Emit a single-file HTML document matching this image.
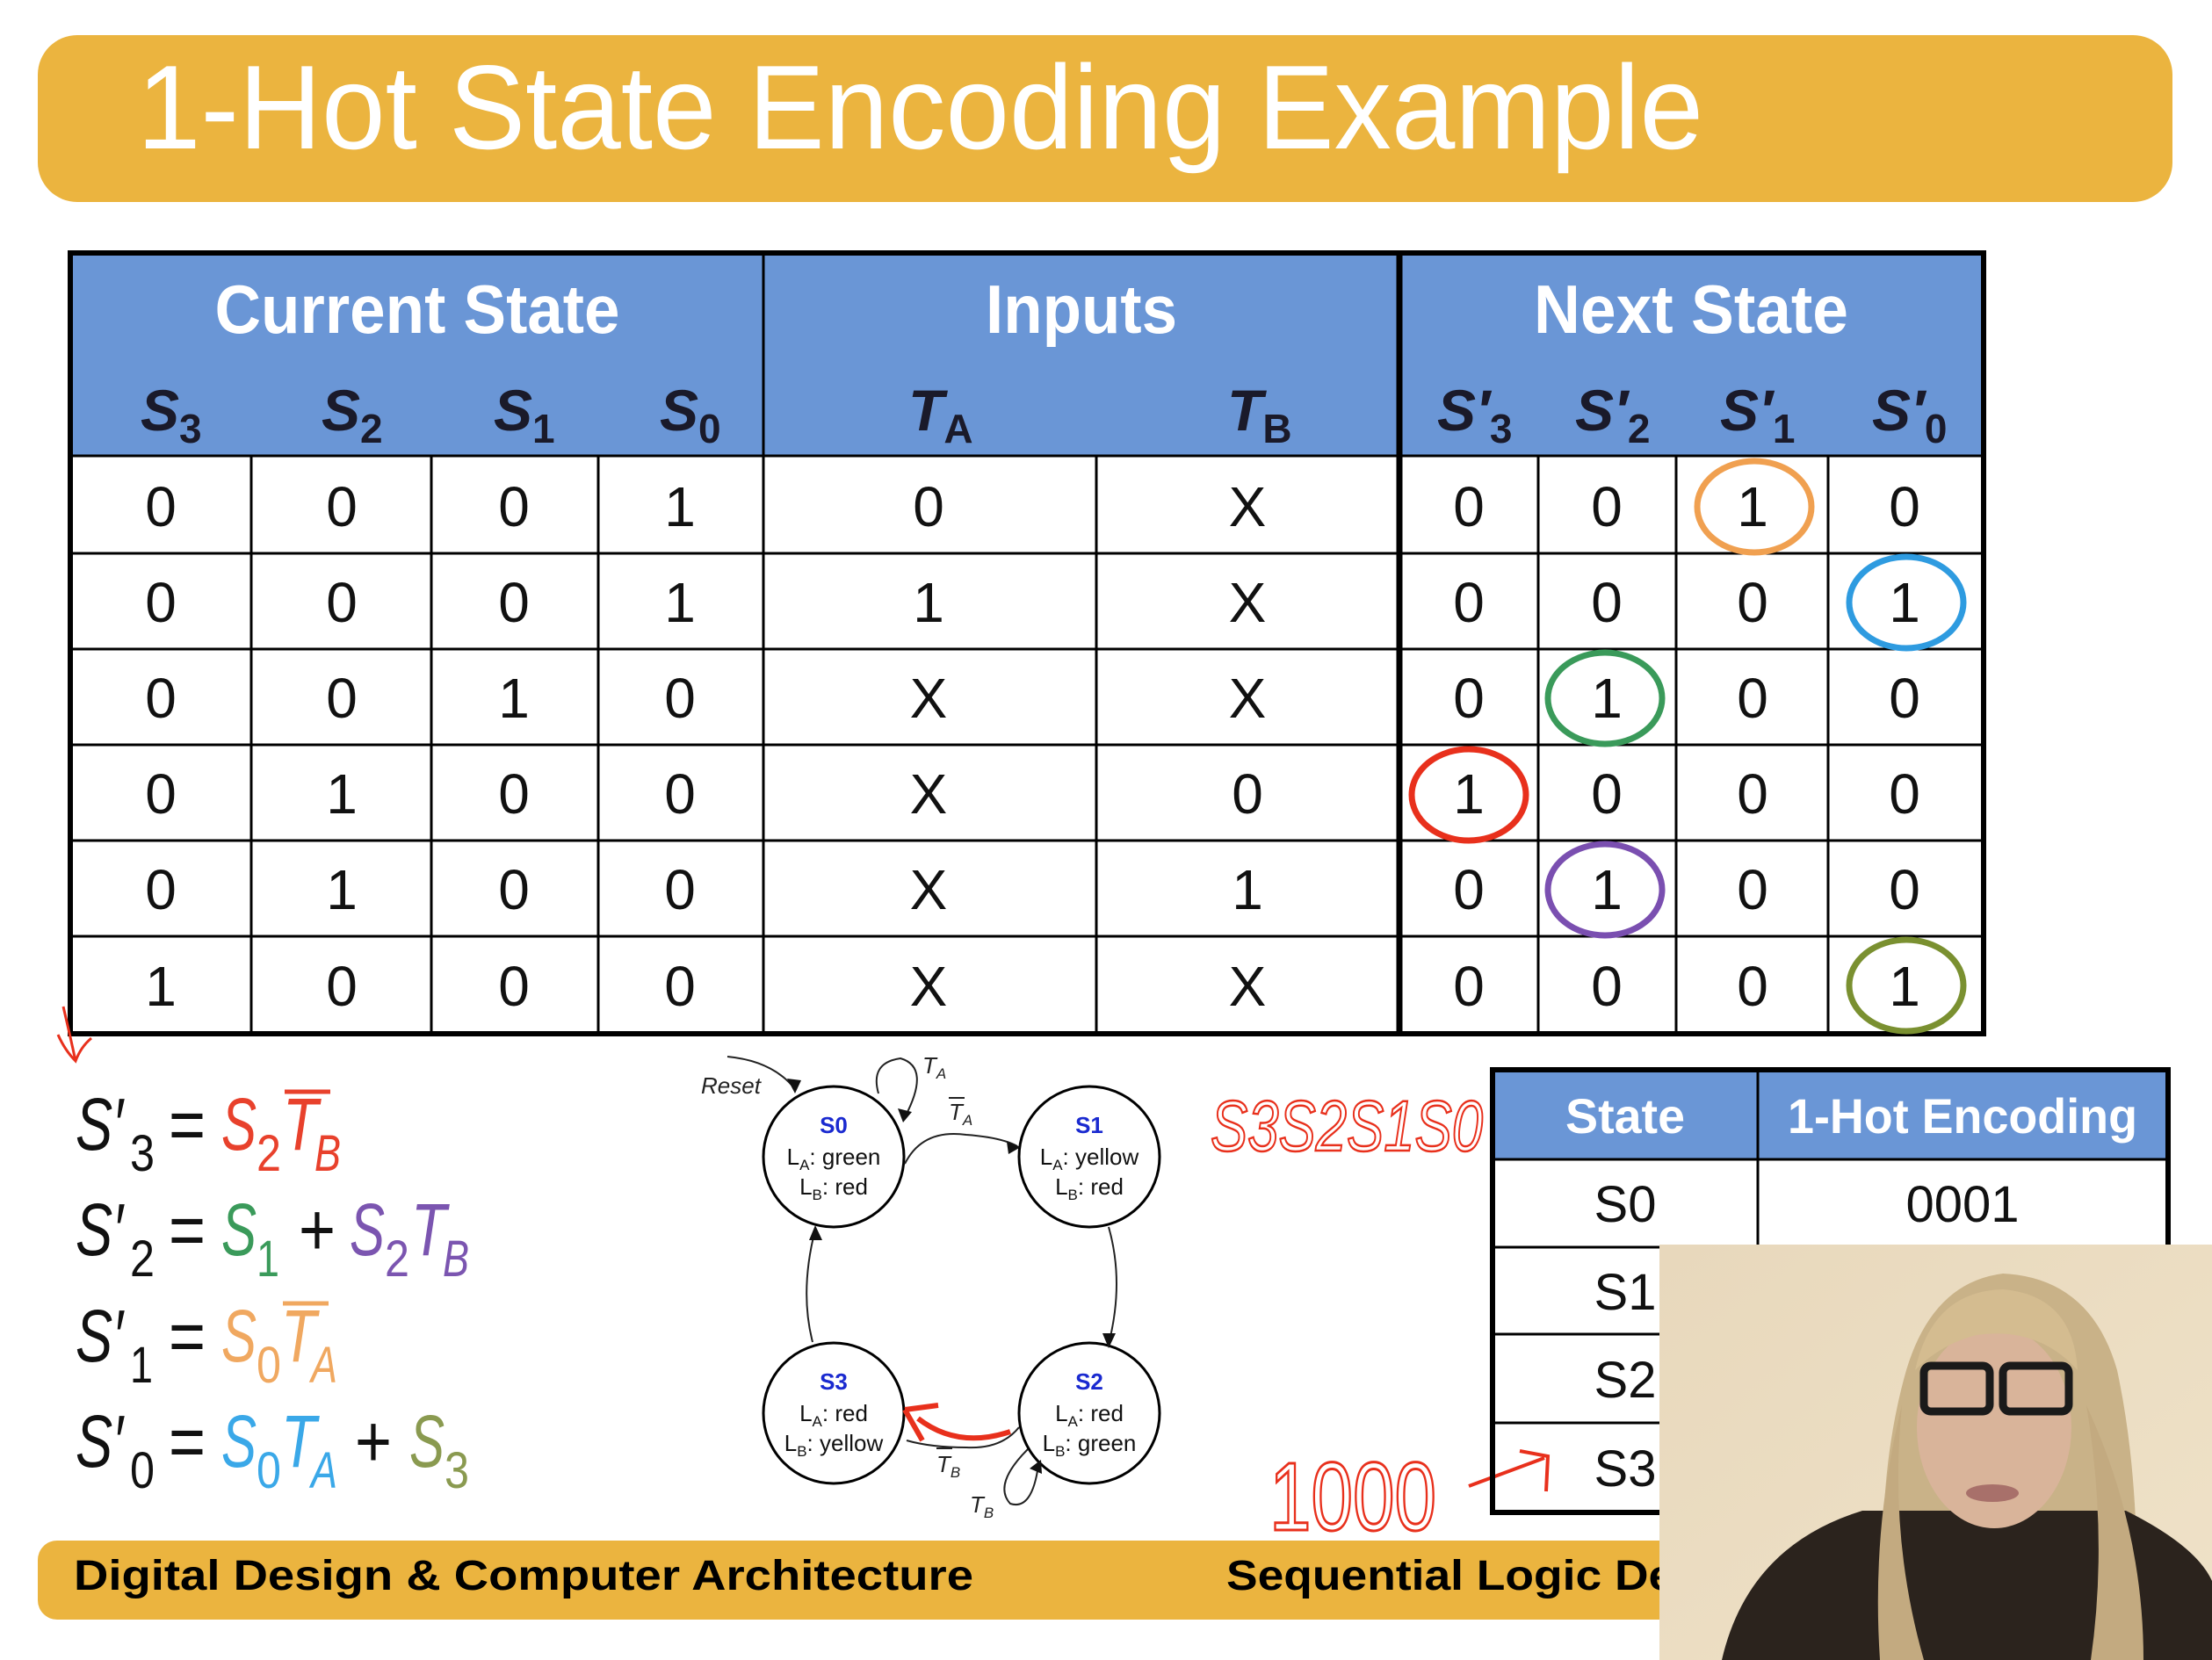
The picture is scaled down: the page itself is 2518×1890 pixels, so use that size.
<!DOCTYPE html>
<html><head><meta charset="utf-8"><style>
html,body{margin:0;padding:0;background:#fff;}
svg{display:block;}
text{font-family:"Liberation Sans",sans-serif;}
</style></head><body>
<svg width="2518" height="1890" viewBox="0 0 2518 1890" xmlns="http://www.w3.org/2000/svg">
<rect width="2518" height="1890" fill="#fff"/>
<!-- Title -->
<rect x="43" y="40" width="2430" height="190" rx="45" fill="#EBB43F"/>
<text x="156" y="169" font-size="136" fill="#fff" textLength="1783" lengthAdjust="spacingAndGlyphs">1-Hot State Encoding Example</text>

<!-- Main table -->
<rect x="80" y="288" width="2178" height="231" fill="#6A96D6"/>
<g font-weight="bold" fill="#fff" font-size="78">
<text x="475" y="379" text-anchor="middle" textLength="461" lengthAdjust="spacingAndGlyphs">Current State</text>
<text x="1231" y="379" text-anchor="middle" textLength="218" lengthAdjust="spacingAndGlyphs">Inputs</text>
<text x="1925" y="379" text-anchor="middle" textLength="358" lengthAdjust="spacingAndGlyphs">Next State</text>
</g>
<g font-weight="bold" font-style="italic" fill="#1a1a2a" font-size="66">
<text x="160" y="490">S<tspan font-size="46" font-style="normal" dy="14">3</tspan></text>
<text x="366" y="490">S<tspan font-size="46" font-style="normal" dy="14">2</tspan></text>
<text x="562" y="490">S<tspan font-size="46" font-style="normal" dy="14">1</tspan></text>
<text x="751" y="490">S<tspan font-size="46" font-style="normal" dy="14">0</tspan></text>
<text x="1034" y="490">T<tspan font-size="46" font-style="normal" dy="14">A</tspan></text>
<text x="1397" y="490">T<tspan font-size="46" font-style="normal" dy="14">B</tspan></text>
<text x="1636" y="490">S′<tspan font-size="46" font-style="normal" dy="14">3</tspan></text>
<text x="1793" y="490">S′<tspan font-size="46" font-style="normal" dy="14">2</tspan></text>
<text x="1958" y="490">S′<tspan font-size="46" font-style="normal" dy="14">1</tspan></text>
<text x="2131" y="490">S′<tspan font-size="46" font-style="normal" dy="14">0</tspan></text>
</g>
<g stroke="#000" stroke-width="3">
<line x1="80" y1="519" x2="2258" y2="519"/>
<line x1="80" y1="630" x2="2258" y2="630"/>
<line x1="80" y1="739" x2="2258" y2="739"/>
<line x1="80" y1="848" x2="2258" y2="848"/>
<line x1="80" y1="957" x2="2258" y2="957"/>
<line x1="80" y1="1066" x2="2258" y2="1066"/>
<line x1="286" y1="519" x2="286" y2="1177"/>
<line x1="491" y1="519" x2="491" y2="1177"/>
<line x1="681" y1="519" x2="681" y2="1177"/>
<line x1="869" y1="288" x2="869" y2="1177"/>
<line x1="1248" y1="519" x2="1248" y2="1177"/>
<line x1="1751" y1="519" x2="1751" y2="1177"/>
<line x1="1908" y1="519" x2="1908" y2="1177"/>
<line x1="2081" y1="519" x2="2081" y2="1177"/>
</g>
<line x1="1593" y1="288" x2="1593" y2="1177" stroke="#000" stroke-width="7"/>
<rect x="80" y="288" width="2178" height="889" fill="none" stroke="#000" stroke-width="6"/>
<g font-size="64" fill="#111" text-anchor="middle">
<g transform="translate(0,599)"><text x="183">0</text><text x="389">0</text><text x="585">0</text><text x="774">1</text><text x="1057">0</text><text x="1420">X</text><text x="1672">0</text><text x="1829">0</text><text x="1995">1</text><text x="2168">0</text></g>
<g transform="translate(0,708)"><text x="183">0</text><text x="389">0</text><text x="585">0</text><text x="774">1</text><text x="1057">1</text><text x="1420">X</text><text x="1672">0</text><text x="1829">0</text><text x="1995">0</text><text x="2168">1</text></g>
<g transform="translate(0,817)"><text x="183">0</text><text x="389">0</text><text x="585">1</text><text x="774">0</text><text x="1057">X</text><text x="1420">X</text><text x="1672">0</text><text x="1829">1</text><text x="1995">0</text><text x="2168">0</text></g>
<g transform="translate(0,926)"><text x="183">0</text><text x="389">1</text><text x="585">0</text><text x="774">0</text><text x="1057">X</text><text x="1420">0</text><text x="1672">1</text><text x="1829">0</text><text x="1995">0</text><text x="2168">0</text></g>
<g transform="translate(0,1035)"><text x="183">0</text><text x="389">1</text><text x="585">0</text><text x="774">0</text><text x="1057">X</text><text x="1420">1</text><text x="1672">0</text><text x="1829">1</text><text x="1995">0</text><text x="2168">0</text></g>
<g transform="translate(0,1145)"><text x="183">1</text><text x="389">0</text><text x="585">0</text><text x="774">0</text><text x="1057">X</text><text x="1420">X</text><text x="1672">0</text><text x="1829">0</text><text x="1995">0</text><text x="2168">1</text></g>
</g>
<g fill="none" stroke-width="7">
<ellipse cx="1997" cy="577" rx="65" ry="52" stroke="#F0A050"/>
<ellipse cx="2170" cy="686" rx="65" ry="52" stroke="#2E9BE0"/>
<ellipse cx="1827" cy="795" rx="65" ry="52" stroke="#3A9A5A"/>
<ellipse cx="1672" cy="905" rx="65" ry="52" stroke="#E8301C"/>
<ellipse cx="1827" cy="1013" rx="65" ry="52" stroke="#7A4FB0"/>
<ellipse cx="2170" cy="1122" rx="65" ry="52" stroke="#7A9030"/>
</g>

<!-- red mark top-left -->
<path d="M72 1146 Q80 1180 86 1208 M66 1178 Q74 1196 86 1208 Q92 1192 104 1182" stroke="#E8301C" stroke-width="3" fill="none"/>

<!-- Equations -->
<g font-size="84" font-style="italic">
<g fill="#111"><text x="86" y="1309" textLength="54" lengthAdjust="spacingAndGlyphs">S′</text><text x="148" y="1333" font-size="58" font-style="normal" textLength="28" lengthAdjust="spacingAndGlyphs">3</text><text x="192" y="1309" font-style="normal" textLength="42" lengthAdjust="spacingAndGlyphs">=</text></g>
<g fill="#E8412C"><text x="252" y="1309" textLength="40" lengthAdjust="spacingAndGlyphs">S</text><text x="292" y="1333" font-size="58" font-style="normal" textLength="28" lengthAdjust="spacingAndGlyphs">2</text><text x="322" y="1309" textLength="40" lengthAdjust="spacingAndGlyphs">T</text><text x="358" y="1333" font-size="58" textLength="30" lengthAdjust="spacingAndGlyphs">B</text></g>
<line x1="324" y1="1243" x2="376" y2="1243" stroke="#E8412C" stroke-width="5"/>

<g fill="#111"><text x="86" y="1429" textLength="54" lengthAdjust="spacingAndGlyphs">S′</text><text x="148" y="1453" font-size="58" font-style="normal" textLength="28" lengthAdjust="spacingAndGlyphs">2</text><text x="192" y="1429" font-style="normal" textLength="42" lengthAdjust="spacingAndGlyphs">=</text><text x="340" y="1429" font-style="normal" textLength="42" lengthAdjust="spacingAndGlyphs">+</text></g>
<g fill="#3A9A5A"><text x="252" y="1429" textLength="40" lengthAdjust="spacingAndGlyphs">S</text><text x="292" y="1453" font-size="58" font-style="normal" textLength="26" lengthAdjust="spacingAndGlyphs">1</text></g>
<g fill="#7B55B0"><text x="398" y="1429" textLength="40" lengthAdjust="spacingAndGlyphs">S</text><text x="438" y="1453" font-size="58" font-style="normal" textLength="28" lengthAdjust="spacingAndGlyphs">2</text><text x="468" y="1429" textLength="40" lengthAdjust="spacingAndGlyphs">T</text><text x="504" y="1453" font-size="58" textLength="30" lengthAdjust="spacingAndGlyphs">B</text></g>

<g fill="#111"><text x="86" y="1550" textLength="54" lengthAdjust="spacingAndGlyphs">S′</text><text x="148" y="1574" font-size="58" font-style="normal" textLength="26" lengthAdjust="spacingAndGlyphs">1</text><text x="192" y="1550" font-style="normal" textLength="42" lengthAdjust="spacingAndGlyphs">=</text></g>
<g fill="#F0A860"><text x="252" y="1550" textLength="40" lengthAdjust="spacingAndGlyphs">S</text><text x="292" y="1574" font-size="58" font-style="normal" textLength="28" lengthAdjust="spacingAndGlyphs">0</text><text x="320" y="1550" textLength="40" lengthAdjust="spacingAndGlyphs">T</text><text x="354" y="1574" font-size="58" textLength="30" lengthAdjust="spacingAndGlyphs">A</text></g>
<line x1="322" y1="1484" x2="374" y2="1484" stroke="#F0A860" stroke-width="5"/>

<g fill="#111"><text x="86" y="1670" textLength="54" lengthAdjust="spacingAndGlyphs">S′</text><text x="148" y="1694" font-size="58" font-style="normal" textLength="28" lengthAdjust="spacingAndGlyphs">0</text><text x="192" y="1670" font-style="normal" textLength="42" lengthAdjust="spacingAndGlyphs">=</text><text x="404" y="1670" font-style="normal" textLength="42" lengthAdjust="spacingAndGlyphs">+</text></g>
<g fill="#3AA8E8"><text x="252" y="1670" textLength="40" lengthAdjust="spacingAndGlyphs">S</text><text x="292" y="1694" font-size="58" font-style="normal" textLength="28" lengthAdjust="spacingAndGlyphs">0</text><text x="320" y="1670" textLength="40" lengthAdjust="spacingAndGlyphs">T</text><text x="354" y="1694" font-size="58" textLength="30" lengthAdjust="spacingAndGlyphs">A</text></g>
<g fill="#8A9A50"><text x="466" y="1670" textLength="40" lengthAdjust="spacingAndGlyphs">S</text><text x="506" y="1694" font-size="58" font-style="normal" textLength="28" lengthAdjust="spacingAndGlyphs">3</text></g>
</g>

<!-- State diagram -->
<g fill="#fff" stroke="#000" stroke-width="3">
<ellipse cx="949" cy="1317" rx="80" ry="80"/>
<ellipse cx="1240" cy="1317" rx="80" ry="80"/>
<ellipse cx="949" cy="1609" rx="80" ry="80"/>
<ellipse cx="1240" cy="1609" rx="80" ry="80"/>
</g>
<g font-size="26" text-anchor="middle" fill="#111">
<text x="949" y="1290" fill="#1a2ad0" font-weight="bold">S0</text>
<text x="949" y="1326">L<tspan font-size="17" dy="6">A</tspan><tspan dy="-6">: green</tspan></text>
<text x="949" y="1360">L<tspan font-size="17" dy="6">B</tspan><tspan dy="-6">: red</tspan></text>
<text x="1240" y="1290" fill="#1a2ad0" font-weight="bold">S1</text>
<text x="1240" y="1326">L<tspan font-size="17" dy="6">A</tspan><tspan dy="-6">: yellow</tspan></text>
<text x="1240" y="1360">L<tspan font-size="17" dy="6">B</tspan><tspan dy="-6">: red</tspan></text>
<text x="949" y="1582" fill="#1a2ad0" font-weight="bold">S3</text>
<text x="949" y="1618">L<tspan font-size="17" dy="6">A</tspan><tspan dy="-6">: red</tspan></text>
<text x="949" y="1652">L<tspan font-size="17" dy="6">B</tspan><tspan dy="-6">: yellow</tspan></text>
<text x="1240" y="1582" fill="#1a2ad0" font-weight="bold">S2</text>
<text x="1240" y="1618">L<tspan font-size="17" dy="6">A</tspan><tspan dy="-6">: red</tspan></text>
<text x="1240" y="1652">L<tspan font-size="17" dy="6">B</tspan><tspan dy="-6">: green</tspan></text>
</g>
<g font-size="26" font-style="italic" fill="#222">
<text x="798" y="1245">Reset</text>
<text x="1050" y="1222">T<tspan font-size="17" dy="6">A</tspan></text>
<text x="1080" y="1275">T<tspan font-size="17" dy="6">A</tspan></text>
<text x="1066" y="1676">T<tspan font-size="17" dy="6">B</tspan></text>
<text x="1104" y="1722">T<tspan font-size="17" dy="6">B</tspan></text>
</g>
<g stroke="#222" stroke-width="2" fill="none">
<line x1="1080" y1="1250" x2="1098" y2="1250"/>
<line x1="1066" y1="1649" x2="1084" y2="1649"/>
<path d="M828 1203 Q880 1208 905 1240"/>
<path d="M1000 1245 Q990 1210 1025 1205 Q1060 1215 1030 1272"/>
<path d="M1030 1325 Q1050 1285 1100 1292 Q1140 1295 1158 1305"/>
<path d="M1262 1397 Q1280 1460 1262 1530"/>
<path d="M925 1528 Q910 1470 928 1400"/>
<path d="M1160 1625 Q1140 1650 1100 1648 Q1060 1648 1032 1640"/>
<path d="M1170 1650 Q1130 1690 1150 1712 Q1175 1720 1182 1668"/>
</g>
<g fill="#111">
<path d="M905 1245 L896 1228 L912 1230 Z"/>
<path d="M1028 1278 L1022 1262 L1038 1266 Z"/>
<path d="M1162 1306 L1146 1300 L1148 1314 Z"/>
<path d="M1262 1535 L1255 1518 L1270 1518 Z"/>
<path d="M928 1395 L921 1412 L936 1412 Z"/>
<path d="M1185 1662 L1172 1672 L1186 1678 Z"/>
</g>
<path d="M1150 1630 Q1090 1650 1045 1615 M1030 1605 L1068 1600 M1030 1605 L1050 1640" stroke="#E8301C" stroke-width="6" fill="none"/>

<!-- handwritten -->
<text x="1378" y="1310" font-family="Liberation Serif" font-style="italic" font-size="82" fill="none" stroke="#E8301C" stroke-width="2.5" textLength="310" lengthAdjust="spacingAndGlyphs">S3S2S1S0</text>
<text x="1445" y="1742" font-family="Liberation Serif" font-size="110" fill="none" stroke="#E8301C" stroke-width="3" textLength="190" lengthAdjust="spacingAndGlyphs">1000</text>
<path d="M1672 1692 L1758 1660 M1730 1652 L1762 1658 L1760 1698" stroke="#E8301C" stroke-width="4" fill="none"/>

<!-- small table -->
<rect x="1699" y="1218" width="769" height="102" fill="#6A96D6"/>
<g stroke="#000" stroke-width="3">
<line x1="1699" y1="1320" x2="2468" y2="1320"/>
<line x1="1699" y1="1420" x2="2468" y2="1420"/>
<line x1="1699" y1="1519" x2="2468" y2="1519"/>
<line x1="1699" y1="1620" x2="2468" y2="1620"/>
<line x1="2001" y1="1218" x2="2001" y2="1722"/>
</g>
<rect x="1699" y="1218" width="769" height="504" fill="none" stroke="#000" stroke-width="6"/>
<g font-size="56" font-weight="bold" fill="#fff" text-anchor="middle">
<text x="1850" y="1290" textLength="136" lengthAdjust="spacingAndGlyphs">State</text>
<text x="2234" y="1290" textLength="398" lengthAdjust="spacingAndGlyphs">1-Hot Encoding</text>
</g>
<g font-size="58" fill="#111" text-anchor="middle">
<text x="1850" y="1391">S0</text><text x="2234" y="1391">0001</text>
<text x="1850" y="1491">S1</text>
<text x="1850" y="1591">S2</text>
<text x="1850" y="1692">S3</text>
</g>

<!-- footer -->
<rect x="43" y="1754" width="2440" height="90" rx="22" fill="#EBB43F"/>
<text x="84" y="1810" font-size="48" font-weight="bold" fill="#000" textLength="1024" lengthAdjust="spacingAndGlyphs">Digital Design &amp; Computer Architecture</text>
<text x="1396" y="1810" font-size="48" font-weight="bold" fill="#000" textLength="620" lengthAdjust="spacingAndGlyphs">Sequential Logic Design</text>

<!-- webcam -->
<defs>
<linearGradient id="bg" x1="0" y1="0" x2="1" y2="1"><stop offset="0" stop-color="#E8D8BC"/><stop offset="1" stop-color="#EFE2C8"/></linearGradient>
<clipPath id="cam"><rect x="1889" y="1417" width="629" height="473"/></clipPath>
</defs>
<g clip-path="url(#cam)">
<rect x="1889" y="1417" width="629" height="473" fill="url(#bg)"/>
<path d="M2150 1890 Q2130 1700 2170 1560 Q2200 1460 2280 1450 Q2380 1455 2410 1560 Q2440 1700 2430 1890 Z" fill="#C9B288"/>
<path d="M1960 1890 Q1990 1760 2120 1720 L2420 1720 Q2500 1760 2518 1800 L2518 1890 Z" fill="#2B231D"/>
<ellipse cx="2270" cy="1625" rx="88" ry="115" fill="#D9B49A"/>
<path d="M2180 1560 Q2200 1470 2280 1468 Q2360 1475 2365 1560 Q2320 1510 2250 1520 Q2210 1530 2180 1560 Z" fill="#D4BC90"/>
<rect x="2190" y="1555" width="75" height="52" rx="8" fill="none" stroke="#1a1a1a" stroke-width="9"/>
<rect x="2280" y="1555" width="75" height="52" rx="8" fill="none" stroke="#1a1a1a" stroke-width="9"/>
<ellipse cx="2268" cy="1700" rx="30" ry="10" fill="#A8706A"/>
<path d="M2165 1600 Q2150 1750 2190 1890 L2140 1890 Q2130 1740 2165 1600 Z" fill="#C3AA80"/>
<path d="M2375 1600 Q2400 1750 2380 1890 L2440 1890 Q2440 1740 2375 1600 Z" fill="#C3AA80"/>
</g>
</svg>
</body></html>
